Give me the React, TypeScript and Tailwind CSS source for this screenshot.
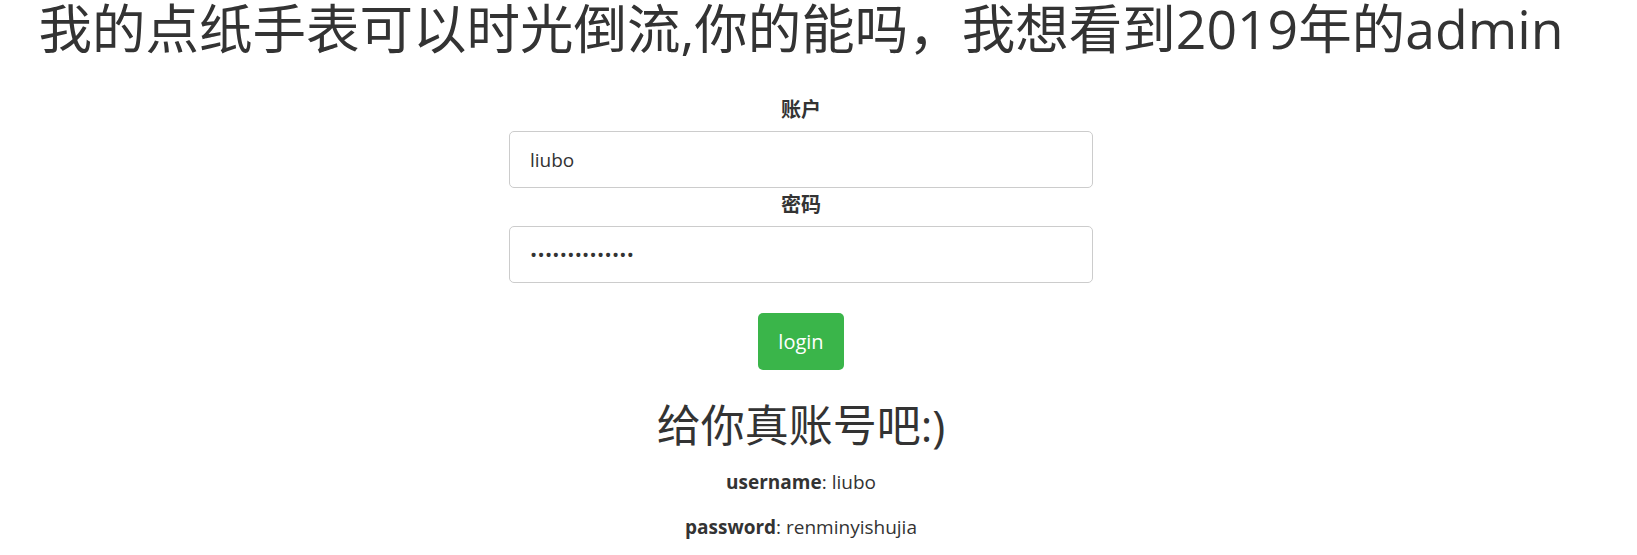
import React from 'react';

const font = { fontFamily: '"Open Sans", "Noto Sans CJK SC", sans-serif' };

export default function App() {
  return (
    <div className="min-h-screen bg-white text-[#333]" style={font}>
      <div className="w-[1602px] text-center">
        <h1 className="text-[53.5px] leading-[56px] font-normal pt-[1px]">
          我的点纸手表可以时光倒流,你的能吗，我想看到2019年的admin
        </h1>

        <form className="mx-auto mt-[41px] w-[584px]" onSubmit={(e) => e.preventDefault()}>
          <label className="block text-[20px] font-bold leading-6 mb-[9px]">账户</label>
          <input
            type="text"
            defaultValue="liubo"
            className="block w-full h-[57px] px-5 rounded-[5px] border border-[#ccc] text-[19px] text-[#333] outline-none"
          />
          <label className="block text-[20px] font-bold leading-6 mt-[5px] mb-[9px]">密码</label>
          <input
            type="password"
            defaultValue="renminyishujia"
            className="block w-full h-[57px] px-5 rounded-[5px] border border-[#ccc] text-[19px] text-[#333] tracking-[0.3px] outline-none"
          />
          <button
            type="submit"
            className="mt-[30px] w-[86px] h-[57px] rounded-[5px] bg-[#3ab54a] text-white text-[20px]"
          >
            login
          </button>
        </form>

        <h2 className="mt-[27px] text-[44px] leading-[56px] font-normal">给你真账号吧:)</h2>
        <p className="mt-[15px] text-[19px] leading-[28px]">
          <b>username</b>: liubo
        </p>
        <p className="mt-[17px] text-[19px] leading-[28px]">
          <b>password</b>: renminyishujia
        </p>
      </div>
    </div>
  );
}
